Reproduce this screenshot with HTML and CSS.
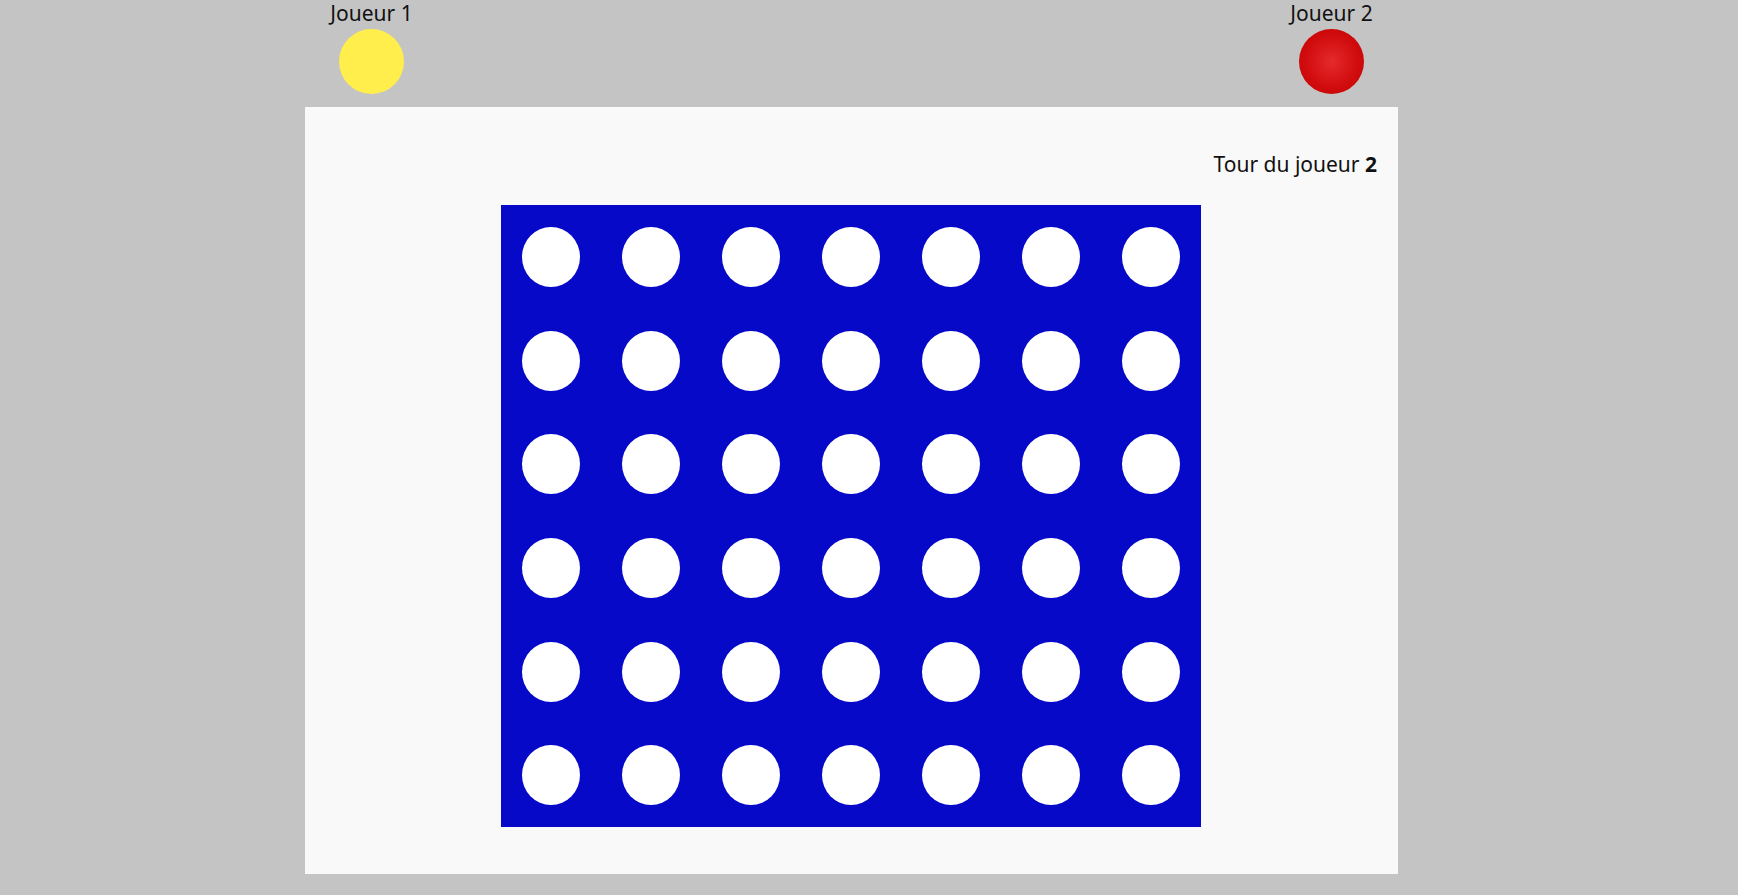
FILE: index.html
```html
<!DOCTYPE html>
<html lang="fr">
<head>
<meta charset="utf-8">
<title>Puissance 4</title>
<link rel="stylesheet" href="styles.css">
</head>
<body>
<div class="page">
  <header class="players">
    <div class="player">
      <span class="player-name">Joueur 1</span>
      <span class="token token-yellow"></span>
    </div>
    <div class="player">
      <span class="player-name">Joueur 2</span>
      <span class="token token-red"></span>
    </div>
  </header>
  <main class="panel">
    <p class="turn">Tour du joueur <strong>2</strong></p>
    <div class="board">
      <div class="column"><span class="cell"><span class="hole"></span></span><span class="cell"><span class="hole"></span></span><span class="cell"><span class="hole"></span></span><span class="cell"><span class="hole"></span></span><span class="cell"><span class="hole"></span></span><span class="cell"><span class="hole"></span></span></div>
      <div class="column"><span class="cell"><span class="hole"></span></span><span class="cell"><span class="hole"></span></span><span class="cell"><span class="hole"></span></span><span class="cell"><span class="hole"></span></span><span class="cell"><span class="hole"></span></span><span class="cell"><span class="hole"></span></span></div>
      <div class="column"><span class="cell"><span class="hole"></span></span><span class="cell"><span class="hole"></span></span><span class="cell"><span class="hole"></span></span><span class="cell"><span class="hole"></span></span><span class="cell"><span class="hole"></span></span><span class="cell"><span class="hole"></span></span></div>
      <div class="column"><span class="cell"><span class="hole"></span></span><span class="cell"><span class="hole"></span></span><span class="cell"><span class="hole"></span></span><span class="cell"><span class="hole"></span></span><span class="cell"><span class="hole"></span></span><span class="cell"><span class="hole"></span></span></div>
      <div class="column"><span class="cell"><span class="hole"></span></span><span class="cell"><span class="hole"></span></span><span class="cell"><span class="hole"></span></span><span class="cell"><span class="hole"></span></span><span class="cell"><span class="hole"></span></span><span class="cell"><span class="hole"></span></span></div>
      <div class="column"><span class="cell"><span class="hole"></span></span><span class="cell"><span class="hole"></span></span><span class="cell"><span class="hole"></span></span><span class="cell"><span class="hole"></span></span><span class="cell"><span class="hole"></span></span><span class="cell"><span class="hole"></span></span></div>
      <div class="column"><span class="cell"><span class="hole"></span></span><span class="cell"><span class="hole"></span></span><span class="cell"><span class="hole"></span></span><span class="cell"><span class="hole"></span></span><span class="cell"><span class="hole"></span></span><span class="cell"><span class="hole"></span></span></div>
    </div>
  </main>
</div>
</body>
</html>
```
FILE: styles.css
```css
html, body {
  margin: 0;
  padding: 0;
}

body {
  background: #c4c4c4;
  font-family: "Noto Sans", "Open Sans", sans-serif;
  color: #111;
}

.page {
  width: 1093px;
  margin-left: 305px;
}

.players {
  display: flex;
  justify-content: space-between;
  height: 107px;
}

.player {
  width: 133px;
  display: flex;
  flex-direction: column;
  align-items: center;
}

.player-name {
  font-size: 21px;
  line-height: 26px;
  height: 26px;
}

.token {
  display: block;
  width: 65px;
  height: 65px;
  border-radius: 50%;
  margin-top: 3px;
}

.token-yellow {
  background: #ffee4b;
}

.token-red {
  background: radial-gradient(circle at 50% 50%, #e52a2c 0%, #d20d0f 55%, #c00000 100%);
}

.panel {
  background: #f9f9f9;
  height: 767px;
  overflow: hidden;
}

.turn {
  margin: 42px 0 0;
  padding-right: 21px;
  text-align: right;
  font-size: 21px;
  line-height: 30px;
}

.turn strong {
  font-weight: 700;
}

.board {
  width: 700px;
  height: 622px;
  margin: 26px 0 0 196px;
  background: #0709c9;
  display: grid;
  grid-template-columns: repeat(7, 1fr);
}

.column {
  display: flex;
  flex-direction: column;
}

.cell {
  flex: 1;
  display: flex;
  align-items: center;
  justify-content: center;
}

.hole {
  display: block;
  width: 58px;
  height: 60px;
  border-radius: 50%;
  background: #ffffff;
}
```
